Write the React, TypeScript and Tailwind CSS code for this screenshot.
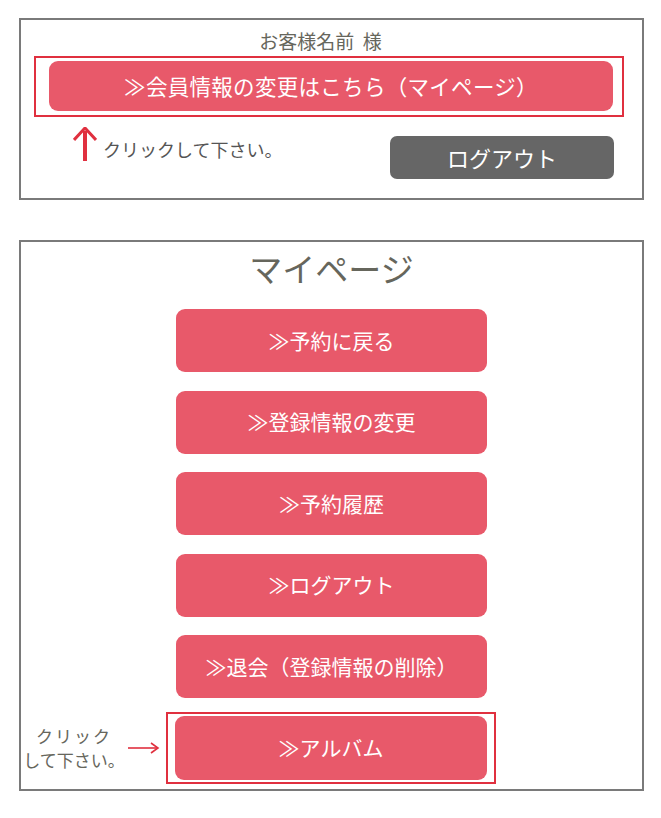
import React from "react";

const font = { fontFamily: '"Noto Sans CJK JP", "Noto Sans", sans-serif' };

const menu = ["≫予約に戻る", "≫登録情報の変更", "≫予約履歴", "≫ログアウト", "≫退会（登録情報の削除）"];

function UpArrow() {
  return (
    <svg width="24" height="34" viewBox="0 0 24 34" className="shrink-0">
      <path d="M12 4 V34" stroke="#e0303f" strokeWidth="4" />
      <path d="M1 13 L12 1 L23 13" fill="none" stroke="#e0303f" strokeWidth="3" strokeLinejoin="miter" />
    </svg>
  );
}

function RightArrow() {
  return (
    <svg width="32" height="12" viewBox="0 0 32 12" className="shrink-0">
      <path d="M0 6 H30" stroke="#e0303f" strokeWidth="1.6" />
      <path d="M23 1 L30 6 L23 11" fill="none" stroke="#e0303f" strokeWidth="1.6" />
    </svg>
  );
}

export default function App() {
  return (
    <div className="w-[661px] h-[818px] bg-white pt-[18px] pl-[19px]" style={font}>
      {/* account panel */}
      <div className="w-[625px] h-[182px] border-2 border-[#7a7a7a] flex flex-col">
        <div className="mt-[8px] pr-[22px] text-center text-[19px] leading-[25px] text-[#66665c]">お客様名前&nbsp;&nbsp;様</div>
        <div className="mt-[3px] ml-[13px] w-[590px] h-[61px] border-2 border-[#e0303f] pl-[13px] pr-[9px] pt-[3px] pb-[4px]">
          <div className="h-full rounded-[9px] bg-[#e8596a] flex items-center justify-center text-white text-[21.5px] tracking-[0.3px]">
            ≫会員情報の変更はこちら（マイページ）
          </div>
        </div>
        <div className="mt-[19px] flex items-start">
          <div className="ml-[52px] mt-[-9px] flex items-end gap-[6px]">
            <UpArrow />
            <span className="text-[18px] leading-[22px] text-[#555] pb-[1px]">クリックして下さい。</span>
          </div>
          <div className="ml-auto mr-[28px] w-[224px] h-[43px] rounded-[7px] bg-[#666666] flex items-center justify-center text-white text-[22px]">
            ログアウト
          </div>
        </div>
      </div>

      {/* my page panel */}
      <div className="mt-[40px] w-[625px] h-[551px] border-2 border-[#7a7a7a] flex flex-col">
        <div className="mt-[6px] text-center text-[33px] leading-[40px] text-[#66665c]">マイページ</div>
        <div className="mt-[21px] ml-[155px] flex flex-col gap-[18.5px]">
          {menu.map((label) => (
            <div
              key={label}
              className="w-[311px] h-[63px] rounded-[9px] bg-[#e8596a] flex items-center justify-center text-white text-[21px]"
            >
              {label}
            </div>
          ))}
        </div>
        <div className="mt-[14px] flex items-center">
          <div className="ml-[1px] w-[104px] shrink-0 whitespace-nowrap text-center text-[17px] leading-[24px] text-[#66665c]">
            <span className="tracking-[2px]">クリック</span>
            <br />
            して下さい。
          </div>
          <div className="ml-[2px]">
            <RightArrow />
          </div>
          <div className="ml-[6px] w-[330px] h-[72px] border-2 border-[#e0303f] pl-[7px] pr-[7px] py-[2px]">
            <div className="h-full w-[312px] rounded-[9px] bg-[#e8596a] flex items-center justify-center text-white text-[21px]">
              ≫アルバム
            </div>
          </div>
        </div>
      </div>
    </div>
  );
}
